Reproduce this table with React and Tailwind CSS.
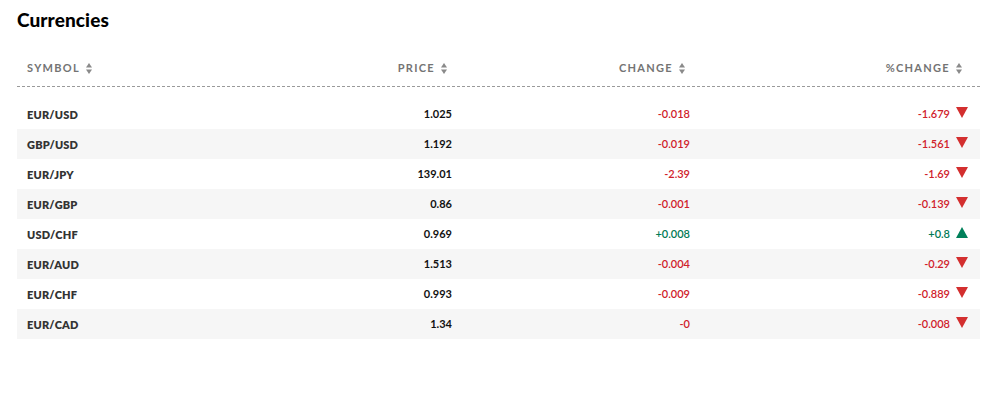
const rows = [
  { sym: 'EUR/USD', price: '1.025', chg: '-0.018', pct: '-1.679', up: false },
  { sym: 'GBP/USD', price: '1.192', chg: '-0.019', pct: '-1.561', up: false },
  { sym: 'EUR/JPY', price: '139.01', chg: '-2.39', pct: '-1.69', up: false },
  { sym: 'EUR/GBP', price: '0.86', chg: '-0.001', pct: '-0.139', up: false },
  { sym: 'USD/CHF', price: '0.969', chg: '+0.008', pct: '+0.8', up: true },
  { sym: 'EUR/AUD', price: '1.513', chg: '-0.004', pct: '-0.29', up: false },
  { sym: 'EUR/CHF', price: '0.993', chg: '-0.009', pct: '-0.889', up: false },
  { sym: 'EUR/CAD', price: '1.34', chg: '-0', pct: '-0.008', up: false },
];

const SortIcon = () => (
  <svg width="6" height="11" viewBox="0 0 6 11" className="ml-[6px] inline-block">
    <path d="M3 0 L6 4.5 L0 4.5 Z" fill="#8a8a8a" />
    <path d="M3 11 L6 6.5 L0 6.5 Z" fill="#8a8a8a" />
  </svg>
);

const Tri = ({ up }) =>
  up ? (
    <svg width="12" height="11" viewBox="0 0 12 11" className="ml-[6px] -mt-[3px]">
      <path d="M6 0 L12 11 L0 11 Z" fill="#00805a" />
    </svg>
  ) : (
    <svg width="12" height="11" viewBox="0 0 12 11" className="ml-[6px] -mt-[3px]">
      <path d="M0 0 L12 0 L6 11 Z" fill="#d32f2f" />
    </svg>
  );

const cols = 'grid grid-cols-[170px_275px_238px_277px]';

export default function App() {
  return (
    <div className="w-[997px] h-[408px] bg-white px-[17px] pt-[9px] font-['Lato',sans-serif]">
      <h2 className="text-[19px] leading-[22px] font-black text-black tracking-[0.1px]">Currencies</h2>
      <div className="mt-[19px]">
        <div className={`${cols} h-[37px] items-center border-b border-dashed border-[#9a9a9a] text-[11px] font-bold tracking-[1.3px] text-[#747474]`}>
          <div className="pl-[10px] flex items-center">SYMBOL<SortIcon /></div>
          <div className="pr-[15px] flex items-center justify-end">PRICE<SortIcon /></div>
          <div className="pr-[15px] flex items-center justify-end">CHANGE<SortIcon /></div>
          <div className="pr-[15px] flex items-center justify-end">%CHANGE<SortIcon /></div>
        </div>
        <div className="mt-[12px]">
          {rows.map((r, i) => (
            <div
              key={r.sym}
              className={`${cols} h-[30px] items-center text-[11px] ${i % 2 === 1 ? 'bg-[#f6f6f6]' : 'bg-white'}`}
            >
              <div className="pl-[10px] pt-[3px] font-extrabold text-[#333] tracking-[0.2px]">{r.sym}</div>
              <div className="pr-[10px] text-right font-bold text-[#111]">{r.price}</div>
              <div className={`pr-[10px] text-right font-semibold ${r.up ? 'text-[#007a55]' : 'text-[#d0202a]'}`}>{r.chg}</div>
              <div className={`pr-[9px] flex items-center justify-end font-semibold ${r.up ? 'text-[#007a55]' : 'text-[#d0202a]'}`}>
                {r.pct}
                <Tri up={r.up} />
              </div>
            </div>
          ))}
        </div>
      </div>
    </div>
  );
}
